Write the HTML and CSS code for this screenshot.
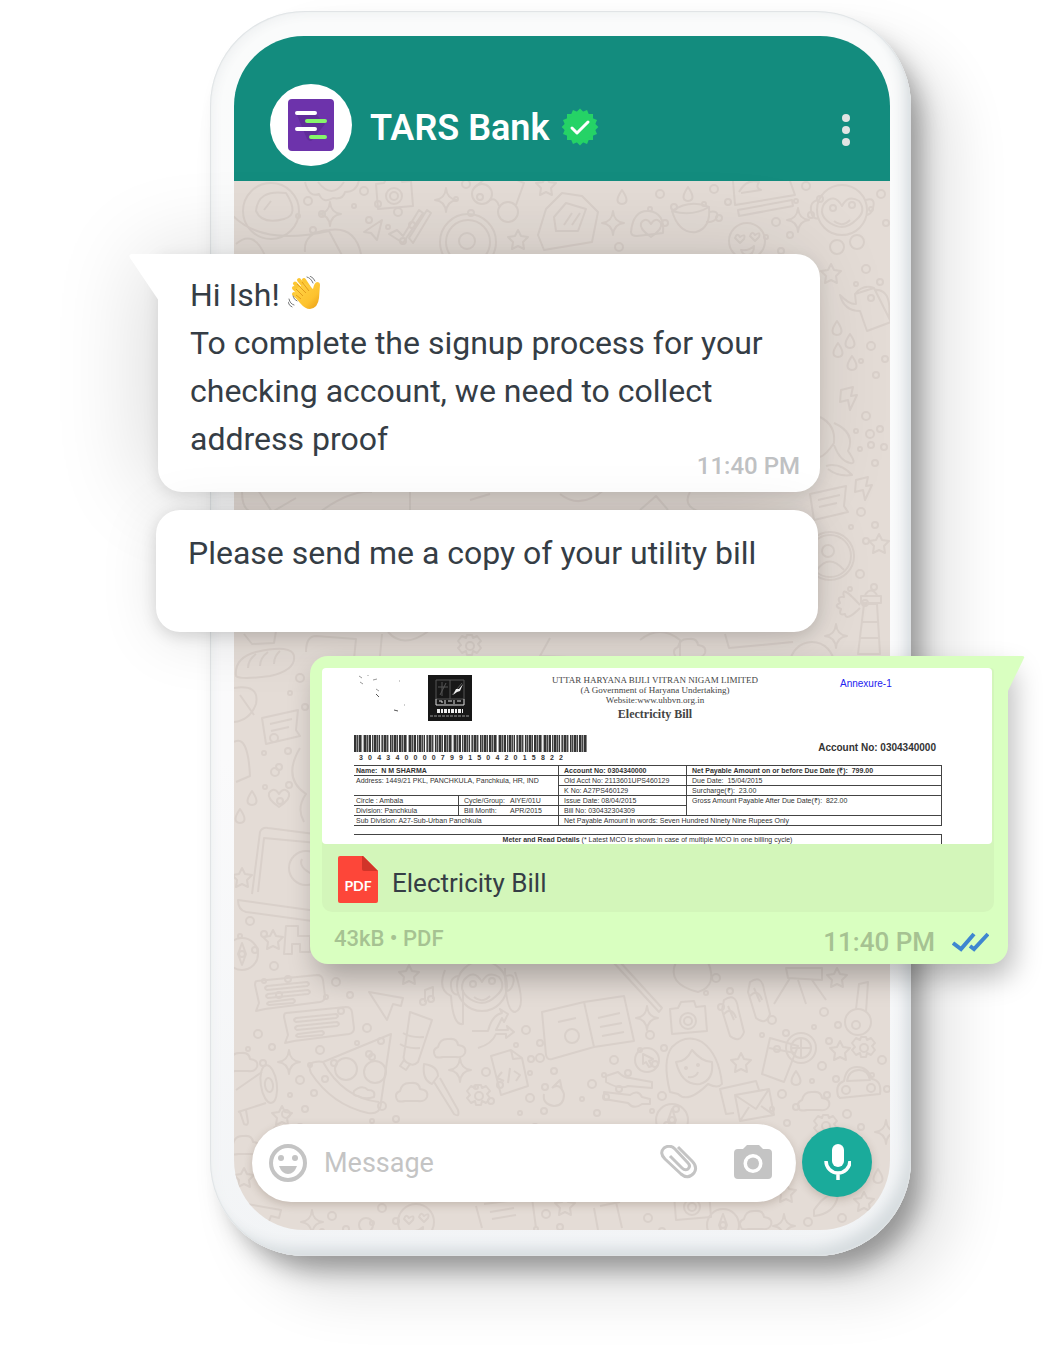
FILE: index.html
```html
<!DOCTYPE html>
<html lang="en">
<head>
<meta charset="utf-8">
<meta name="viewport" content="width=device-width, initial-scale=1">
<title>TARS Bank chat</title>
<link rel="stylesheet" href="styles.css">
</head>
<body>
<main class="stage">
  <section class="phone">
    <div class="screen">
      <header class="topbar">
        <span class="avatar">
          <svg width="48" height="54" viewBox="0 0 48 54" aria-hidden="true">
            <rect x="1" y="1" width="46" height="52" rx="4" fill="#6d33ab"/>
            <path d="M10 17l10 24q4 4 6 0l12-15-10-11z" fill="#5b2a92" opacity=".7"/>
            <g stroke-width="4" stroke-linecap="round">
              <path d="M10 15h18M10 31h18" stroke="#fff"/>
              <path d="M20 23h18M24 39h14" stroke="#86f56b"/>
            </g>
          </svg>
        </span>
        <h1 class="name">TARS Bank</h1>
        <svg class="badge" width="38" height="38" viewBox="-19 -19 38 38" aria-label="Verified" role="img">
          <g fill="#25d366">
            <rect x="-13" y="-13" width="26" height="26"/>
            <rect x="-13" y="-13" width="26" height="26" transform="rotate(22.500)"/>
            <rect x="-13" y="-13" width="26" height="26" transform="rotate(45)"/>
            <rect x="-13" y="-13" width="26" height="26" transform="rotate(67.500)"/>
          </g>
          <path d="M-8 1l5 5L8-5" fill="none" stroke="#fff" stroke-width="3" stroke-linecap="round" stroke-linejoin="round"/>
        </svg>
        <button class="menu" type="button" aria-label="Menu">
          <svg width="8" height="34" viewBox="0 0 8 34" fill="#e2e4e3"><circle cx="4" cy="5" r="4"/><circle cx="4" cy="17" r="4"/><circle cx="4" cy="29" r="4"/></svg>
        </button>
      </header>

      <div class="chat">
        <svg class="wallpaper" viewBox="234 181 656 1049" preserveAspectRatio="xMidYMin slice" aria-hidden="true">
          <defs>
            <path id="star" d="M0-10l3 6 7 1-5 5 1 7-6-3-6 3 1-7-5-5 7-1z"/>
            <path id="spark" d="M0-12q1 11 11 12-10 1-11 12-1-11-11-12 10-1 11-12z"/>
            <path id="drop" d="M0-7q9 13 0 14-9-1 0-14z"/>
            <path id="cloud" d="M-14 9q-5-7 2-10 2-9 11-8 8-1 9 6 9 1 7 8-2 5-9 4h-13q-4 1-7 0z"/>
            <path id="bolt" d="M-7-9l12-3-2 9 6-1-7 15-2-10-8 2z"/>
            <path id="heart" d="M0 9q-12-8-10-14 5-7 10 1 5-8 10-1 2 6-10 14z"/>
            <g id="gear"><circle r="4"/><path d="M-3-11h5l1 3 4-2 4 5-3 3 3 4-4 5-4-2-1 4h-5l-1-4-4 2-4-5 3-3-3-4 4-5 4 2z"/></g>
            <g id="bubble"><path d="M-32-13l60-6q5 0 6 5l2 16q0 5-5 6l-55 7-9 2 3-8-4-18q0-4 2-4z"/><path d="M-22-8l40-4q4 2 0 4l-40 4q-4-2 0-4zM-21 0l40-4q4 2 0 4l-40 4q-4-2 0-4zM-20 8l24-3q4 2 0 4l-24 2q-4-1 0-3z"/></g>
            <g id="camera"><path d="M-18-9l8-1 3-6 13-1 2 6 9-1 2 25-35 3z"/><circle cy="3" r="8"/><circle cy="3" r="4"/></g>
            <g id="cup"><path d="M-20-6q18-12 37-4 2 21-13 25-17 2-24-21zq20 6 37-4"/><path d="M17-5q10-2 8 5-3 6-11 5"/></g>
            <g id="monkey"><circle r="25"/><path d="M-12 13q-12-8-6-19 10-12 18 2 6-12 17-5 8 10-3 19-12 12-26 3z"/><circle cx="-9" cy="-2" r="3"/><circle cx="10" cy="-5" r="3"/><path d="M-24-10q-10 2-6 15 3 5 7 3M24-10q10-3 7 8-2 7-7 7M-8 11q8 7 16-1"/></g>
            <g id="smile"><circle r="18"/><path d="M-12-3q2-6 5-1 6-4 4 2l-4 4zM3-5q2-6 5-1 6-4 4 2l-4 4zM-6 9q8 1 13-4 0 9-7 9-4 0-6-5z"/></g>
            <g id="mail"><path d="M-20-10l34-6 5 26-34 6zM-20-10l21 14 13-20M-15 16l9-14M19 10L6 1"/><path d="M-21 8l-8 1-6-25 36-8 3 9"/></g>
            <g id="doc"><path d="M-17-18l20-6 11 8 6 28-27 9zM3-24l2 9 9-1M-6-2l-5 6 7 3M6-3l6 4-4 6M2-6L0 9"/></g>
            <g id="book"><path d="M-38-20l42-10 10 45-42 12q-5 1-6-4zM4-30l40-6 10 45-40 6M-22-10l18-4M18-14l22-5M20-5l22-4M22 4l22-4"/><circle cx="-8" cy="4" r="7"/></g>
            <g id="pizza"><path d="M-26-10L42-38 32 30q0 13-13 11-36-8-57-40-4-10 4-11 4-1 8 0 20 36 56 40"/><circle cx="-3" cy="-3" r="11"/><circle cx="26" cy="0" r="11"/><circle cx="20" cy="-18" r="3"/><path d="M5 19q8-7 14-1 8 0 6 7-10 3-16-1-6 0-4-5z"/></g>
            <g id="kettle"><path d="M-13-14l19-6 17 34-24 9-7-20q-16 0-20-16 10 10 16 9zq8-10 19-6M6-18q18-2 15 28"/></g>
            <g id="person"><circle r="24"/><circle r="21"/><circle cx="-2" cy="-5" r="6"/><path d="M-13 14q12-17 27 0"/></g>
            <g id="tower"><path d="M-11 32l6-50h13l3 50zM-8-26h20v7H-8zM-4-27q6-9 12 0M-7 0H9M-9 16h19"/><path d="M-9-17q-20-22-16-8-8-1-4 6-7 3 1 6-3 7 4 5 1 8 15-6"/></g>
            <g id="note"><path d="M-18-8l36-8-2 20 4 6-34 8zM-10-2l22-5M-9 5l18-4"/></g>
            <g id="girl"><path d="M-22 24q-8-32 2-45 14-14 30-5 17 12 20 42-4 5-14 0-20 20-30 10zM-16-6q10 0 16-12 10 12 20 12 2 18-12 22-18 2-24-22z"/><circle cx="-6" cy="0" r="1"/><circle cx="6" cy="-3" r="1"/><path d="M-4 9q8 1 10-5"/></g>
            <g id="car"><path d="M-20 8q-3-12 6-15 2-14 13-14t15 12q10 2 8 15l-40 4zM-11-7q2-11 12-11 9 0 11 10z"/><circle cx="-12" cy="2" r="4"/><circle cx="13" cy="0" r="4"/></g>
            <g id="compass"><circle r="16"/><circle r="3"/><path d="M0-11l4 11-4 11-4-11z"/></g>
            <g id="pack"><path d="M-30 10l8-26 16-16 20 3 16 16-6 30-48 8zM-14-8l12-14 20 6-8 22-22 0zM-4 0l8-12M4 0l8-12"/></g>
            <g id="key"><circle cy="12" r="13"/><circle cx="-2" cy="15" r="4"/><path d="M-2-1l3-25 9-2-2 30"/></g>
            <g id="glasses"><circle cx="-16" cy="-6" r="10"/><circle cx="10" cy="12" r="10"/><path d="M-8 0q6-3 9 6M-24-12l12-10M18 5l8-22-14-6"/></g>
            <g id="laptop"><path d="M-30 32l8-62q2-5 8-4l62 8M-24 30l6-54 64 6M-44 38l100 14-4 10-88-12q-8-2-8-12z"/><circle cx="24" cy="6" r="17"/><path d="M20-3q-4 8 10 15"/></g>
            <g id="sandal"><path d="M-6-18q12-8 14 8L14 14q-4 12-14 4L-8-8zM-6-4q8-8 12 4M-2-12l6 14"/></g>
            <g id="megaphone"><path d="M-26 4l26-18M-24 26l28-9M-22 26l4 12q4 2 4-2l-2-12"/><ellipse cx="7" cy="-1" rx="8" ry="19" transform="rotate(-8)"/><ellipse cx="7" cy="0" rx="4" ry="7" transform="rotate(-8)"/></g>
            <g id="tube"><path d="M-2-24l22 8-14 42q-4 4-8 2-8-3-6-9zM-9-3q8 5 21 4M-12 8q8 5 20 4M-8 24l-4 6 6 4 4-6"/></g>
            <g id="brush"><path d="M-18-22q14 2 14 12l-6 8q-10-4-8-20zM-8-4L12 28q6 4 4-4L-2-8"/></g>
            <path id="plane" d="M-17-8l34 6-2 8-8-2-6 16z"/>
            <g id="bread"><path d="M-30 12q-2-18 20-24 36-8 38 4 2 14-24 20-30 4-34 0zM-18 4q0-8 8-14M-6 2q0-8 8-14M8 0q0-8 6-13"/></g>
            <g id="drink"><path d="M-14-18l28 8-14 36-22-8zM-15-8l26 5"/><circle cx="17" cy="-8" r="15"/><circle cx="17" cy="-8" r="10"/><path d="M17-18v20M7-8h20"/></g>
            <g id="rings">
              <circle cx="0" cy="0" r="4"/><circle cx="14" cy="13" r="3"/><circle cx="-10" cy="15" r="2"/><circle cx="5" cy="29" r="3"/>
            </g>
          </defs>
          <g class="doodles">
            <circle cx="271" cy="211" r="28"/><path d="M256 211q2-22 30-18 14 22-2 26-22 6-28-8zM264 210l7-9"/>
            <path d="M233 216q30 30 96 15l16 30M236 244q18-16 30 14M305 252q-2-20 24-22 26-4 32 24"/>
            <path d="M305 182q4 16 14 12 4 10 14 4 10 2 12-6 12 0 14-12M318 182q14 18 26 0"/>
            <use href="#camera" x="394" y="193"/><use href="#glasses" x="498" y="200"/><use href="#pack" x="568" y="225"/>
            <circle cx="468" cy="242" r="28"/><circle cx="468" cy="242" r="22"/><circle cx="467" cy="241" r="8"/>
            <path d="M389 234l8-4 6 6 16-26 4 3-20 30zM409 238l18-28 4 3-18 30zM364 232l18-12-5 20-6-7z"/>
            <use href="#spark" x="446" y="200"/><use href="#spark" x="330" y="214"/><use href="#star" x="518" y="240"/><use href="#star" x="546" y="186"/>
            <use href="#drop" x="622" y="197"/><use href="#drop" x="688" y="194"/><use href="#spark" x="613" y="223"/><use href="#cup" x="692" y="217"/>
            <path d="M631 232q2-22 18-21 16 2 14 22l-26 3q-6 0-6-4z"/><use href="#heart" x="651" y="228"/><use href="#smile" x="747" y="241"/>
            <path d="M733 181l2 24 60-10-5-14M738 210l54-10 1 6-54 10zM739 192q8-14 20-10-4 6 2 8l-20 3"/>
            <use href="#spark" x="798" y="220"/><use href="#monkey" x="842" y="210"/>
            <circle cx="837" cy="247" r="7"/><circle cx="857" cy="242" r="7"/>
            <use href="#star" x="831" y="274"/><use href="#kettle" x="868" y="308"/><use href="#drop" x="837" y="328"/><use href="#drop" x="850" y="341"/><use href="#drop" x="838" y="350"/><use href="#drop" x="852" y="363"/>
            <use href="#bolt" x="848" y="399"/><path d="M820 417q16 8 14 26-8 12-14 14M834 423q22 10 14 28 10 14 2 12-10-2-16-18M826 466q14-4 26 9-14 2-24-6"/>
            <use href="#note" x="828" y="502"/><use href="#bolt" x="863" y="489"/><use href="#person" x="830" y="556"/><use href="#star" x="879" y="544"/><use href="#tower" x="869" y="622"/><use href="#spark" x="836" y="636"/><circle cx="812" cy="664" r="22"/>
            <path d="M242 492q0 18 10 20M258 490l14 22 24-14M320 512q30-22 52-20M410 490v22h24M470 500l20-6M560 494q20 16 44-4M640 510l16-14 12 14M690 492q-8 14 10 20"/>
            <path d="M244 634l8 10 22-1 2-12M306 652q0-16 10-16l40 3-2 20M380 656l2-22M388 632q16 18 42-2M550 638l-10 18 60 2M640 640q20-16 40 0v18M725 634l4 14 64-6"/>
            <use href="#gear" x="470" y="646"/><use href="#cloud" x="690" y="648"/>
            <use href="#bread" x="266" y="664"/><path d="M234 688q26-4 22 16-6 16-22 18M240 695l14 20"/><use href="#note" x="280" y="726"/>
            <path d="M234 742q14-8 16 34l-14 6M300 748q-18 30 6 46-10 14-2 28"/><use href="#heart" x="279" y="798"/><use href="#drop" x="252" y="798"/><use href="#drop" x="240" y="816"/>
            <use href="#laptop" x="282" y="862"/><use href="#star" x="242" y="878"/><use href="#compass" x="242" y="954"/><use href="#star" x="273" y="940"/><path d="M286 926h12v10h12v16h-10v-8h-8v10h-8z"/>
            <use href="#bubble" x="289" y="994"/><use href="#bubble" x="318" y="1026"/>
            <use href="#plane" x="386" y="1000"/><use href="#star" x="409" y="975"/><path d="M425 1002v-12l8-3v12"/><circle cx="423" cy="1002" r="3"/><circle cx="431" cy="999" r="3"/>
            <use href="#monkey" x="482" y="986"/><path d="M445 970q-8 20 6 26 2 30 12 28V990M505 968q0 44 10 44 12-4 0-40"/>
            <use href="#tube" x="412" y="1036"/><use href="#cloud" x="450" y="1048"/><path d="M472 1031l16 0q4-16 14-18l-2-4 8 5-4 8-2-4-6 12h12l-1-4 7 6-8 6v-4h-10q-4 10-18 14"/>
            <use href="#pizza" x="349" y="1072"/><use href="#spark" x="289" y="1062"/><use href="#megaphone" x="262" y="1086"/><use href="#cloud" x="242" y="1062"/><use href="#cloud" x="412" y="1092"/><use href="#brush" x="442" y="1086"/><use href="#spark" x="460" y="1070"/><use href="#gear" x="479" y="1096"/><use href="#doc" x="508" y="1074"/>
            <use href="#book" x="580" y="1032"/><path d="M552 1088q8-6 12 6 0 12-10 12-12-2-10-12M552 1088l8-8 2 10"/>
            <use href="#star" x="282" y="1116"/><use href="#cloud" x="245" y="1145"/><use href="#star" x="244" y="1178"/>
            <use href="#camera" x="688" y="1018"/><use href="#sandal" x="730" y="1018"/><use href="#sandal" x="756" y="1000"/><path d="M620 962l42 46-3 4-46-50M676 962q-10 22 22 30 20-6 10-30"/>
            <path d="M786 968h36v12l-34-2zM790 978l-16 26M798 980l8 24M812 980l14 20"/><use href="#star" x="837" y="978"/><use href="#key" x="858" y="1010"/>
            <use href="#spark" x="647" y="1018"/><circle cx="647" cy="1060" r="12"/><path d="M643 1054l10 5-4 2 3 5-3 1-3-5-3 2z"/>
            <use href="#girl" x="692" y="1068"/><use href="#star" x="741" y="1063"/><use href="#drink" x="784" y="1056"/><use href="#star" x="840" y="1051"/><use href="#gear" x="864" y="1048"/><use href="#car" x="858" y="1088"/><use href="#drop" x="796" y="1078"/>
            <path d="M606 1076l12-4q6 6 12 6l22 4v6l-24-2q-8 4-22-4zM604 1092l26 3q8-6 12 2l8 2v5h-8q-8 6-14-1l-24-4z"/><use href="#mail" x="755" y="1105"/><use href="#cloud" x="814" y="1101"/><use href="#compass" x="672" y="1120"/><use href="#gear" x="826" y="1126"/><use href="#spark" x="886" y="1132"/>
            <use href="#plane" x="264" y="1212"/><use href="#spark" x="312" y="1222"/><use href="#smile" x="416" y="1222"/><circle cx="366" cy="1225" r="7"/><path d="M476 1206l6 22M484 1204l48-6 4 30M490 1212l24-4M492 1219l24-4"/><use href="#star" x="565" y="1206"/><path d="M594 1208l4 22M600 1206l20-4M616 1202l6 26"/><use href="#camera" x="692" y="1204"/><use href="#compass" x="723" y="1225"/><use href="#cloud" x="756" y="1220"/><use href="#spark" x="784" y="1226"/><use href="#star" x="864" y="1202"/><path d="M814 1210q14-20 24-14-4 18-24 20z"/><use href="#drop" x="878" y="1176"/><use href="#star" x="786" y="1193"/>
            <use href="#rings" x="308" y="201"/><use href="#rings" x="364" y="191"/><use href="#rings" x="398" y="212"/><use href="#rings" x="466" y="184"/><use href="#rings" x="660" y="194"/><use href="#rings" x="714" y="189"/><use href="#rings" x="776" y="222"/><use href="#rings" x="806" y="186"/><use href="#rings" x="881" y="194"/><use href="#rings" x="619" y="247"/><use href="#rings" x="866" y="269"/><use href="#rings" x="871" y="346"/><use href="#rings" x="866" y="416"/><use href="#rings" x="870" y="434"/><use href="#rings" x="861" y="512"/><use href="#rings" x="860" y="574"/><use href="#rings" x="300" y="678"/><use href="#rings" x="274" y="738"/><use href="#rings" x="275" y="772"/><use href="#rings" x="250" y="921"/><use href="#rings" x="274" y="966"/><use href="#rings" x="336" y="982"/><use href="#rings" x="367" y="1028"/><use href="#rings" x="258" y="1034"/><use href="#rings" x="300" y="1080"/><use href="#rings" x="320" y="1050"/><use href="#rings" x="486" y="1072"/><use href="#rings" x="526" y="1030"/><use href="#rings" x="540" y="1058"/><use href="#rings" x="530" y="1098"/><use href="#rings" x="592" y="1084"/><use href="#rings" x="614" y="1060"/><use href="#rings" x="650" y="1035"/><use href="#rings" x="662" y="1096"/><use href="#rings" x="716" y="978"/><use href="#rings" x="772" y="1020"/><use href="#rings" x="824" y="1012"/><use href="#rings" x="822" y="1066"/><use href="#rings" x="782" y="1094"/><use href="#rings" x="847" y="1114"/><use href="#rings" x="882" y="1060"/><use href="#rings" x="332" y="1216"/><use href="#rings" x="382" y="1208"/><use href="#rings" x="546" y="1214"/><use href="#rings" x="648" y="1218"/><use href="#rings" x="808" y="1222"/><use href="#rings" x="842" y="1218"/><use href="#rings" x="286" y="1114"/><use href="#rings" x="382" y="1106"/>
          </g>
        </svg>

        <article class="message received first">
          <svg class="tail tail-left" width="30" height="48" viewBox="0 0 30 48" aria-hidden="true"><path d="M30 0H3Q-1 0 1 4L30 47z" fill="#fff"/></svg>
          <p class="text">Hi Ish! <svg class="wave" role="img" aria-label="waving hand" width="34" height="34" viewBox="0 0 34 34">
            <defs><linearGradient id="skin" x1="0" y1="0" x2="1" y2="1"><stop offset="0" stop-color="#ffd54a"/><stop offset=".65" stop-color="#fdc22e"/><stop offset="1" stop-color="#e79a16"/></linearGradient></defs>
            <path d="M6 12L14 20M7 7.500L16 17M11 4L19 14M16 4L22 13M6 18L15 26" stroke="#fcc733" stroke-width="4" stroke-linecap="round"/>
            <path d="M8 13L17 7 25 13Q26 7 29 6 32 6 32 9L31 22Q30 32 22 33 17 33 12 27L6 20z" fill="url(#skin)"/>
            <path d="M8 13l7 7M9 8l9 9M14 6l7 9M8 19l5 4" stroke="#e39c1c" stroke-width="1" fill="none"/>
            <path d="M19 1q4 1 6 6M22 0q4 2 5 5M1 23q1 5 5 6M0 26q1 4 4 5M5 20q1 4 4 5" fill="none" stroke="#77797b" stroke-width="1" stroke-linecap="round"/>
          </svg><br>To complete the signup process for your checking account, we need to collect address proof</p>
          <time class="time">11:40 PM</time>
        </article>

        <article class="message received second">
          <p class="text">Please send me a copy of your utility bill</p>
        </article>

        <article class="message sent">
          <svg class="tail tail-right" width="18" height="38" viewBox="0 0 18 38" aria-hidden="true"><path d="M0 0H15Q18 0 17 2L0 37z" fill="#d9ffc0"/></svg>
          <div class="attachment">
            <div class="bill">
              <div class="bill-head">
                <svg class="specks" width="74" height="46" viewBox="0 0 74 46" fill="none" stroke="#999" aria-hidden="true"><path d="M5 1l3 2M6 7l3 2M14 0v1M19 5l4-1M22 14l3 2M45 6h1M50 30h1"/><path d="M22 19l3 3M40 35l4 1" stroke="#555"/></svg>
                <svg class="bill-logo" width="44" height="46" viewBox="0 0 44 46" aria-hidden="true">
                  <rect width="44" height="46" fill="#171717"/>
                  <path d="M8 5h28v19H8zM22 5v19M10 12h10M14 7v14M18 8l-6 12M24 20l10-12" fill="none" stroke="#555" stroke-width="1"/>
                  <path d="M25 20l3-6 3 0 4-5-3 7-3 1z" fill="#eee"/>
                  <path d="M8 24v6h28v-6M11 26h3v2M17 25v4M20 26h4M26 25v4M29 26h4" stroke="#ddd" stroke-width="1" fill="none"/>
                  <path d="M9 36h26" stroke="#eee" stroke-width="4" stroke-dasharray="3 1 2 1"/>
                  <path d="M2 41h40" stroke="#999" stroke-width="1" stroke-dasharray="3 1"/>
                </svg>
                <div class="bill-title">
                  <p>UTTAR HARYANA BIJLI VITRAN NIGAM LIMITED</p>
                  <p>(A Government of Haryana Undertaking)</p>
                  <p>Website:www.uhbvn.org.in</p>
                  <h2>Electricity Bill</h2>
                </div>
                <p class="annexure">Annexure-1</p>
              </div>
              <div class="bill-account">
                <div class="barcode">
                  <div class="bars"></div>
                  <p class="digits"><span>3</span><span>0</span><span>4</span><span>3</span><span>4</span><span>0</span><span>0</span><span>0</span><span>0</span><span>7</span><span>9</span><span>9</span><span>1</span><span>5</span><span>0</span><span>4</span><span>2</span><span>0</span><span>1</span><span>5</span><span>8</span><span>2</span><span>2</span></p>
                </div>
                <p class="account">Account No: 0304340000</p>
              </div>
              <table class="bill-table">
                <colgroup><col class="c1"><col class="c2"><col class="c3"><col class="c4"></colgroup>
                <tr><th colspan="2">Name:&nbsp; N M SHARMA</th><th>Account No: 0304340000</th><th>Net Payable Amount on or before Due Date (₹):&nbsp; 799.00</th></tr>
                <tr><td colspan="2" rowspan="2">Address: 1449/21 PKL, PANCHKULA, Panchkula, HR, IND</td><td>Old Acct No: 2113601UPS460129</td><td>Due Date:&nbsp; 15/04/2015</td></tr>
                <tr><td>K No: A27PS460129</td><td>Surcharge(₹):&nbsp; 23.00</td></tr>
                <tr><td>Circle : Ambala</td><td><span class="pair"><span>Cycle/Group:</span><span>AIYE/01U</span></span></td><td>Issue Date: 08/04/2015</td><td rowspan="2">Gross Amount Payable After Due Date(₹):&nbsp; 822.00</td></tr>
                <tr><td>Division: Panchkula</td><td><span class="pair"><span>Bill Month:</span><span>APR/2015</span></span></td><td>Bill No: 030432304309</td></tr>
                <tr><td colspan="2">Sub Division: A27-Sub-Urban Panchkula</td><td colspan="2">Net Payable Amount in words: Seven Hundred Ninety Nine Rupees Only</td></tr>
              </table>
              <p class="meter"><b>Meter and Read Details</b> (* Latest MCO is shown in case of multiple MCO in one billing cycle)</p>
            </div>
            <div class="file">
              <svg width="40" height="48" viewBox="0 0 40 48" role="img" aria-label="PDF">
                <path d="M2 0H25L40 15V45Q40 47 38 47H2Q0 47 0 45V2Q0 0 2 0z" fill="#fd4639"/>
                <path d="M24 0H25L40 15H26Q24 15 24 13z" fill="#d13429"/>
                <text x="20" y="35" text-anchor="middle" class="pdf-label">PDF</text>
              </svg>
              <span class="file-name">Electricity Bill</span>
            </div>
          </div>
          <footer class="meta">
            <span class="size">43kB • PDF</span>
            <time class="sent-time">11:40 PM</time>
            <svg class="ticks" width="37" height="20" viewBox="0 0 37 20" role="img" aria-label="Read"><path d="M1 11l8 6L22 2M18 14l4 3L36 2" fill="none" stroke="#3f86d0" stroke-width="4"/></svg>
          </footer>
        </article>

        <form class="composer">
          <div class="field">
            <button type="button" aria-label="Emoji">
              <svg width="38" height="38" viewBox="0 0 38 38" fill="#c4c4c4"><circle cx="19" cy="19" r="17" fill="none" stroke="#c4c4c4" stroke-width="4"/><circle cx="12" cy="14" r="3"/><circle cx="26" cy="14" r="3"/><path d="M10 22h18q-3 8-9 8t-9-8z"/></svg>
            </button>
            <input type="text" placeholder="Message" aria-label="Message">
            <button type="button" aria-label="Attach">
              <svg width="38" height="36" viewBox="0 0 38 36" fill="none" stroke="#c4c4c4" stroke-width="3"><path d="M18 2L32 16Q38 22 34 28 28 35 21 29L5 14Q-1 8 4 3 10-1 15 4L28 18Q31 21 28 24 25 26 22 23L10 11"/></svg>
            </button>
            <button type="button" aria-label="Camera">
              <svg width="38" height="36" viewBox="0 0 38 36" fill="#c4c4c4"><path fill-rule="evenodd" d="M13 0H25L29 4H34Q38 4 38 8V30Q38 34 34 34H4Q0 34 0 30V8Q0 4 4 4H9zM19 9A9.500 9.500 0 1 0 19 28 9.500 9.500 0 1 0 19 9z"/><circle cx="19" cy="18.500" r="6"/></svg>
            </button>
          </div>
          <button class="mic" type="button" aria-label="Record voice message">
            <svg width="28" height="38" viewBox="0 0 28 38"><rect x="9" y="1" width="12" height="23" rx="6" fill="#fff"/><path d="M3 18A12 12 0 0 0 27 18M15 30V37" fill="none" stroke="#fff" stroke-width="3.500"/></svg>
          </button>
        </form>
      </div>
    </div>
  </section>
</main>
</body>
</html>
```
FILE: styles.css
```css
* { box-sizing: border-box; }

body {
  margin: 0;
  background: #fff;
  color: #353d45;
  font-family: Roboto, "Liberation Sans", sans-serif;
}

p, h1, h2 { margin: 0; font-size: inherit; font-weight: inherit; }

button { padding: 0; border: 0; background: none; cursor: pointer; }

svg { display: block; }

.stage {
  padding: 11px 145px 107px 210px;
  overflow: hidden;
}

.phone {
  padding: 25px 21px 26px 24px;
  border-radius: 95px;
  background: linear-gradient(#fafbfb, #fafafb 60%, #f2f4f6);
  box-shadow:
    inset 0 0 1px 1px #dfe3e5,
    inset -12px -14px 14px -6px #d6dcdf,
    inset 4px 4px 10px #f0f2f3,
    14px 18px 24px -4px rgba(0, 0, 0, .34),
    40px 36px 60px rgba(0, 0, 0, .12);
}

.topbar {
  display: flex;
  align-items: center;
  height: 145px;
  padding: 32px 40px 0 36px;
  border-radius: 70px 70px 0 0;
  background: #138c7e;
}

.avatar {
  display: grid;
  place-items: center;
  width: 82px;
  height: 82px;
  border-radius: 50%;
  background: #fff;
}

.name {
  margin: 6px 12px 0 18px;
  color: #fff;
  font-size: 36px;
  font-weight: 600;
  line-height: 42px;
}

.badge { margin-top: 4px; }

.menu { margin: 10px 0 0 auto; }

.chat {
  position: relative;
  padding: 73px 18px 28px;
  border-radius: 0 0 70px 70px;
  background: #e4dcd6;
}

.wallpaper {
  position: absolute;
  inset: 0;
  width: 100%;
  height: 100%;
  border-radius: 0 0 70px 70px;
}

.doodles {
  fill: none;
  stroke: #d9d0ca;
  stroke-width: 2;
  stroke-linejoin: round;
}

.message { position: relative; }

.received {
  background: #fff;
  box-shadow: 0 4px 16px rgba(0, 0, 0, .14), 0 8px 60px rgba(0, 0, 0, .1);
}

.first {
  margin: 0 52px 18px -94px;
  padding: 17px 20px 14px 32px;
  border-radius: 0 24px 24px 24px;
  box-shadow: 0 4px 16px rgba(0, 0, 0, .1), -16px 0 90px rgba(0, 0, 0, .14);
}

.second {
  margin: 0 54px 24px -96px;
  padding: 19px 32px 55px;
  border-radius: 24px;
}

.text {
  font-size: 32px;
  line-height: 48px;
}

.wave { display: inline-block; vertical-align: -4px; }

.time {
  display: block;
  width: max-content;
  margin: -9px 0 0 auto;
  color: #bfc1c3;
  font-size: 24px;
  font-weight: 500;
  line-height: 24px;
}

.tail { position: absolute; top: 0; }
.tail-left { right: 100%; margin-right: -1px; }
.tail-right { left: 100%; margin-left: -1px; }

.sent {
  margin: 0 -136px 160px 58px;
  padding: 12px 14px 0 12px;
  border-radius: 18px 0 18px 18px;
  background: #d9ffc0;
  box-shadow: 6px 14px 28px rgba(0, 0, 0, .26);
}

.attachment {
  border-radius: 4px 4px 10px 10px;
  background: #d3f6ba;
}

.bill {
  height: 176px;
  margin-right: 2px;
  padding: 7px 50px 0 32px;
  overflow: hidden;
  border-radius: 4px;
  background: #fff;
  color: #333;
  font: 7px/10px "Liberation Sans", Arial, sans-serif;
}

.bill-head {
  display: flex;
  height: 60px;
}

.bill-title {
  width: 216px;
  margin: 0 77px 0 75px;
  color: #444;
  font: 9px/10px "Liberation Serif", "Times New Roman", serif;
  text-align: center;
  white-space: nowrap;
}

.bill-title h2 {
  font-size: 12px;
  font-weight: 700;
  line-height: 18px;
}

.annexure {
  margin-top: 4px;
  color: #2222f0;
  font-size: 10px;
}

.bill-account {
  display: flex;
  justify-content: space-between;
  height: 30px;
  padding-right: 6px;
}

.barcode { width: 233px; }

.bars {
  height: 17px;
  background:
    repeating-linear-gradient(90deg, transparent 0 8px, #eee 8px 9px, transparent 9px 17px, #fff 17px 18px),
    repeating-linear-gradient(90deg, #333 0 2px, #888 2px 3px, #444 3px 4px, #aaa 4px 5px);
}

.digits {
  display: flex;
  justify-content: space-between;
  padding: 1px 24px 0 5px;
  font-weight: 700;
  line-height: 10px;
}

.account {
  margin-top: 8px;
  font-size: 10px;
  font-weight: 700;
}

.bill-table {
  width: 100%;
  border-collapse: collapse;
  border-right: 1px solid #444;
  table-layout: fixed;
}

.c1 { width: 104px; }
.c2 { width: 100px; }
.c3 { width: 128px; }

.bill-table th,
.bill-table td {
  height: 10px;
  padding: 0 0 0 5px;
  border: 1px solid #444;
  line-height: 9px;
  text-align: left;
  vertical-align: top;
  white-space: nowrap;
}

.bill-table th:first-child,
.bill-table td[colspan]:first-child,
.bill-table tr td:first-child { border-left-color: transparent; padding-left: 1px; }

.bill-table tr:nth-child(3) td:first-child { border-left-color: #444; padding-left: 5px; }

.pair { display: flex; gap: 10px; }
.pair > :first-child { width: 36px; }

.meter {
  margin-top: 8px;
  border: 1px solid #444;
  border-left: 0;
  line-height: 9px;
  text-align: center;
}

.file {
  display: flex;
  align-items: center;
  gap: 14px;
  height: 68px;
  padding: 4px 16px 0;
}

.pdf-label {
  fill: #fff;
  font: 700 14px Lato, sans-serif;
}

.file-name {
  padding-top: 6px;
  font-size: 26px;
  line-height: 36px;
}

.meta {
  display: flex;
  align-items: center;
  height: 52px;
  padding: 8px 5px 0 12px;
  color: #a6c292;
  font-weight: 500;
}

.size { flex: 1; padding-bottom: 8px; font-size: 22px; }
.sent-time { font-size: 26px; }
.ticks { margin-left: 17px; }

.composer {
  position: relative;
  display: flex;
  align-items: center;
  gap: 6px;
}

.field {
  display: flex;
  flex: 1;
  align-items: center;
  height: 78px;
  min-width: 0;
  padding: 0 24px 0 17px;
  border-radius: 39px;
  background: #fff;
  box-shadow: 0 3px 8px rgba(80, 60, 40, .22);
}

.field input {
  flex: 1;
  min-width: 0;
  margin: 0 17px;
  padding: 0;
  border: 0;
  outline: 0;
  background: none;
  color: #353d45;
  font: 27px/40px Roboto, "Liberation Sans", sans-serif;
}

.field input::placeholder { color: #c4c4c4; opacity: 1; }

.field button:last-child { margin-left: 36px; }

.mic {
  display: grid;
  place-items: center;
  width: 70px;
  height: 70px;
  margin-bottom: 2px;
  border-radius: 50%;
  background: #1aab9b;
  box-shadow: 0 3px 8px rgba(80, 60, 40, .22);
}
```
